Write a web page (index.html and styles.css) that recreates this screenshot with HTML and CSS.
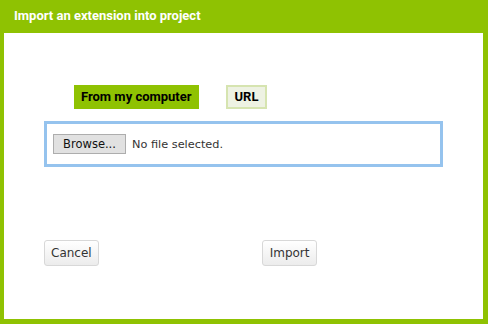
FILE: index.html
```html
<!DOCTYPE html>
<html lang="en">
<head>
  <meta charset="UTF-8">
  <title>Import an extension into project</title>
  <link rel="stylesheet" href="styles.css">
</head>
<body>
  <div class="dialog">
    <div class="caption">Import an extension into project</div>
    <div class="content">
      <div class="tabs">
        <span class="tab active">From my computer</span>
        <span class="tab">URL</span>
      </div>
      <div class="filebox">
        <button class="browse">Browse...</button>
        <span class="filename">No file selected.</span>
      </div>
      <div class="actions">
        <button class="btn">Cancel</button>
        <button class="btn wide">Import</button>
      </div>
    </div>
  </div>
</body>
</html>
```
FILE: styles.css
```css
body {
  margin: 0;
}
.dialog {
  width: 488px;
  height: 324px;
  box-sizing: border-box;
  background: #8fc202;
  padding: 0 5px 5px 4px;
  display: flex;
  flex-direction: column;
}
.caption {
  height: 33px;
  box-sizing: border-box;
  padding: 8px 0 0 10px;
  color: #fff;
  font-family: Roboto, "Liberation Sans", sans-serif;
  font-weight: bold;
  font-size: 13px;
}
.content {
  flex: 1;
  background: #fff;
  padding: 52px 0 0 40px;
}
.tabs {
  display: flex;
  gap: 27px;
  margin-left: 30px;
}
.tab {
  height: 24px;
  box-sizing: border-box;
  padding: 0 7px;
  line-height: 20px;
  border: 2px solid #d6e4b0;
  background: #eef2e3;
  font-family: Roboto, "Liberation Sans", sans-serif;
  font-weight: bold;
  font-size: 13px;
  color: #000;
}
.tab.active {
  padding: 0 5px;
  background: #8fc202;
  border-color: #8fc202;
}
.filebox {
  margin-top: 12px;
  width: 399px;
  height: 46px;
  box-sizing: border-box;
  border: 3px solid #95c3ee;
  display: flex;
  align-items: center;
  padding-left: 6px;
  font-family: "DejaVu Sans", sans-serif;
  font-size: 11.3px;
}
.browse {
  width: 73px;
  height: 20px;
  margin: 0;
  padding: 0;
  border: 1px solid #adadad;
  background: #e1e1e1;
  font-family: "DejaVu Sans", sans-serif;
  font-size: 11.5px;
  color: #111;
}
.filename {
  margin-left: 6px;
  color: #333;
}
.actions {
  margin-top: 73px;
  display: flex;
  gap: 163px;
}
.btn {
  height: 26px;
  margin: 0;
  padding: 0 6px;
  border: 1px solid #d8d8d8;
  border-radius: 3px;
  background: linear-gradient(#ffffff, #ececec);
  font-family: "DejaVu Sans", sans-serif;
  font-size: 12px;
  color: #333;
}
.btn.wide {
  padding: 0 7px;
}
```
